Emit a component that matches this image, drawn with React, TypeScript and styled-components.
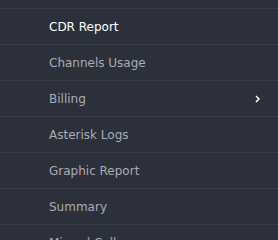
import { createGlobalStyle } from "styled-components";
import styled from "styled-components";

const GlobalStyle = createGlobalStyle`
  html, body {
    margin: 0;
    padding: 0;
    background-color: #2c303a;
    overflow: hidden;
  }
`;

const Sidebar = styled.nav`
  width: 278px;
  height: 240px;
  padding-top: 8px;
  box-sizing: border-box;
  background-color: #2c303a;
  font-family: "DejaVu Sans", sans-serif;
  font-size: 12px;
  overflow: hidden;
`;

const Menu = styled.ul`
  list-style: none;
  margin: 0;
  padding: 0;
`;

const Item = styled.li<{ $active?: boolean }>`
  display: flex;
  align-items: center;
  height: 35px;
  padding: 0 18px 0 49px;
  border-top: 1px solid #383c46;
  color: ${(p) => (p.$active ? "#ffffff" : "#a9adb5")};
  cursor: pointer;
`;

const Label = styled.span`
  flex: auto;
`;

const Chevron = () => (
  <svg width="5" height="8" viewBox="0 0 5 8">
    <polyline points="1,1 4,4 1,7" fill="none" stroke="#ffffff" strokeWidth="1.5" />
  </svg>
);

const items = [
  { key: "cdr", label: "CDR Report", active: true },
  { key: "channels", label: "Channels Usage" },
  { key: "billing", label: "Billing", sub: true },
  { key: "asterisk", label: "Asterisk Logs" },
  { key: "graphic", label: "Graphic Report" },
  { key: "summary", label: "Summary" },
  { key: "missed", label: "Missed Calls" },
];

export default function App() {
  return (
    <>
      <GlobalStyle />
      <Sidebar>
        <Menu>
          {items.map((it) => (
            <Item key={it.key} $active={it.active}>
              <Label>{it.label}</Label>
              {it.sub && <Chevron />}
            </Item>
          ))}
        </Menu>
      </Sidebar>
    </>
  );
}
